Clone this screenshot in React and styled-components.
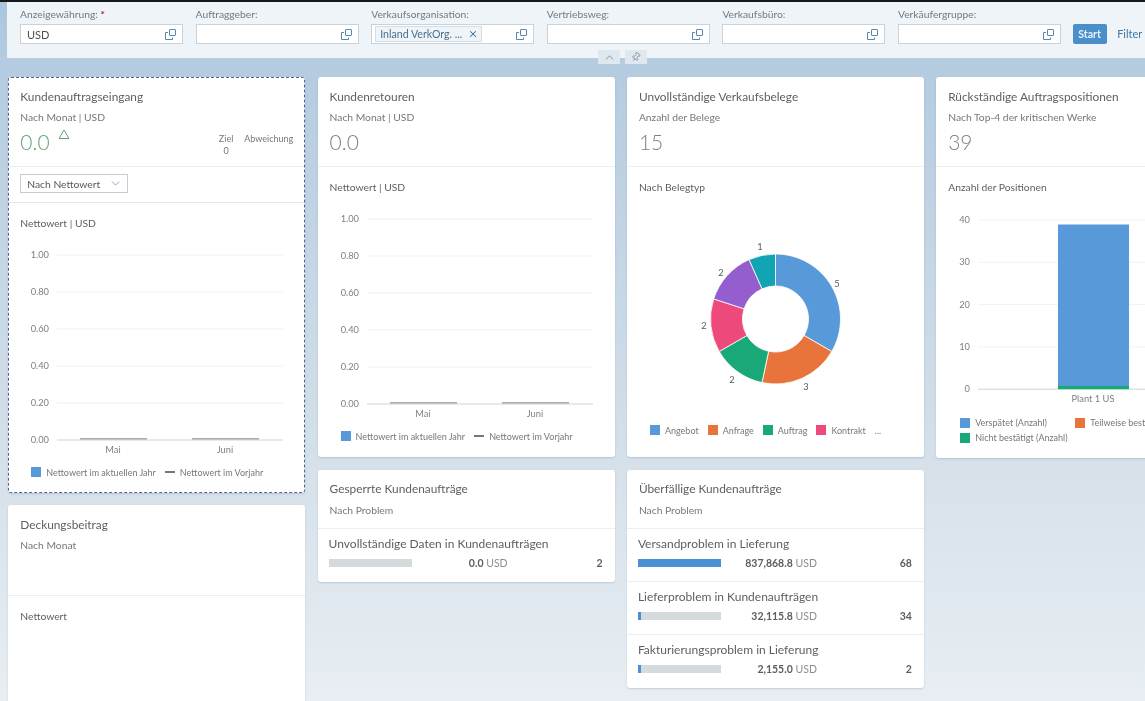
import React from "react";
import styled, { createGlobalStyle } from "styled-components";
import { ChevronDown, ChevronUp, Pin, X } from "lucide-react";

const Global = createGlobalStyle`
  html, body { margin: 0; padding: 0; }
  body { font-family: Lato, "Open Sans", sans-serif; color: #4a4e52; background: #e7edf2; }
  * { box-sizing: border-box; }
`;

const Page = styled.div`
  position: relative;
  width: 1145px;
  height: 701px;
  overflow: hidden;
  border-top: 2px solid #15181c;
  background: linear-gradient(#a9c6de 0, #b4cbe0 58px, #d6e1ea 470px, #e8eef3 699px);
  filter: blur(0.5px);
`;
const FilterBar = styled.div`
  display: flex;
  align-items: flex-start;
  height: 56px;
  margin-left: 7px;
  padding: 6px 0 0 13px;
  gap: 12.6px;
  background: #eff4f8;
  white-space: nowrap;
  overflow: hidden;
`;
const Field = styled.div`
  flex: 0 0 163px;
`;
const FieldLabel = styled.div`
  height: 16px;
  font-size: 10.3px;
  line-height: 13px;
  color: #74797d;
  b { color: #d0132b; font-weight: 700; }
`;
const InputBox = styled.div`
  display: flex;
  align-items: center;
  height: 20px;
  padding: 0 6px 0 6px;
  background: #fff;
  border: 1px solid #c9d2d9;
  font-size: 11px;
  color: #4b4f53;
`;
const InputText = styled.span`
  flex: 1;
`;
const Token = styled.span`
  display: flex;
  align-items: center;
  justify-content: space-between;
  width: 107px;
  height: 16px;
  margin: 0 auto 0 -3px;
  padding: 0 3px 0 4px;
  background: #eff4f8;
  border: 1px solid #d3dfe7;
  color: #48708f;
  font-size: 10.6px;
`;
const StartButton = styled.button`
  flex: 0 0 34px;
  height: 20px;
  margin: 16px 0 0 -1px;
  padding: 0;
  border: none;
  border-radius: 2px;
  background: #4b8fca;
  color: #e8f1f8;
  font: 700 10.5px Lato, sans-serif;
`;
const FilterLink = styled.span`
  margin: 19px 0 0 -2px;
  font-size: 11px;
  color: #3c78a8;
`;
const BarTools = styled.div`
  position: absolute;
  top: 48px;
  left: 598px;
  display: flex;
  gap: 5px;
`;
const ToolButton = styled.div`
  display: flex;
  align-items: center;
  justify-content: center;
  width: 22px;
  height: 14px;
  background: #dfe8ef;
  color: #5f7f99;
`;
const Grid = styled.div`
  display: grid;
  grid-template-columns: repeat(4, 297px);
  column-gap: 12.3px;
  padding: 19px 0 0 8.3px;
`;
const Column = styled.div`
  display: flex;
  flex-direction: column;
  gap: ${(p) => p.$gap ?? 12.5}px;
  align-items: stretch;
`;
const Card = styled.div`
  background: #fff;
  border-radius: 3px;
  box-shadow: 0 1px 2px rgba(60, 90, 120, 0.22);
  ${(p) => p.$focus && "outline: 1px dashed #4f6590; outline-offset: -1px;"}
  ${(p) => p.$tall && "height: 210px;"}
`;
const Head = styled.div`
  height: ${(p) => p.$h || 90}px;
  padding: 11.5px 12px 0;
  border-bottom: 1px solid #eceff1;
`;
const Title = styled.div`
  height: 16px;
  font-size: 11.85px;
  line-height: 16px;
  color: #5c6064;
  white-space: nowrap;
`;
const Sub = styled.div`
  margin-top: 5.5px;
  height: 14px;
  font-size: 10.3px;
  line-height: 14px;
  color: #74787c;
`;
const KpiRow = styled.div`
  display: flex;
  align-items: flex-start;
  margin-top: 3.5px;
`;
const KpiValue = styled.span`
  font-size: 21px;
  line-height: 28px;
  font-weight: 300;
  color: ${(p) => p.$color || "#7c8186"};
`;
const KpiArrow = styled.svg`
  margin: 1px 0 0 8px;
`;
const KpiSide = styled.div`
  margin: 5px 0 0 auto;
  display: flex;
  gap: 11px;
  font-size: 9px;
  line-height: 12px;
  color: #74787c;
  text-align: center;
`;
const SelectRow = styled.div`
  height: 36px;
  padding: 7px 12px 0;
  border-bottom: 1px solid #e3e7ea;
`;
const Select = styled.div`
  display: flex;
  align-items: center;
  justify-content: space-between;
  width: 108px;
  height: 19px;
  padding: 0 5px 0 6px;
  border: 1px solid #c6ccd1;
  font-size: 10.3px;
  color: #55595d;
`;
const Section = styled.div`
  padding-top: 12px;
`;
const SectionLabel = styled.div`
  height: 16px;
  padding-left: 12px;
  font-size: 10.3px;
  line-height: 16px;
  color: #5b5f63;
`;
const ChartSvg = styled.svg`
  display: block;
  margin-top: 14px;
  text {
    font-family: Lato, sans-serif;
    font-size: 9.3px;
    fill: #7b8084;
  }
`;
const Legend = styled.div`
  display: flex;
  align-items: center;
  gap: 9px;
  height: 14px;
  margin-top: ${(p) => p.$top ?? 4}px;
  margin-bottom: ${(p) => p.$bottom ?? 14}px;
  padding-left: 23px;
  white-space: nowrap;
`;
const LegendGrid = styled.div`
  display: grid;
  grid-template-columns: 115px 115px;
  grid-auto-rows: 15px;
  margin: 0 0 13px;
  padding-left: 24px;
  white-space: nowrap;
  overflow: hidden;
`;
const LegendItem = styled.span`
  display: flex;
  align-items: center;
  gap: 5px;
  font-size: 9px;
  color: #74787c;
`;
const Swatch = styled.i`
  flex: 0 0 10px;
  width: 10px;
  height: 10px;
  background: ${(p) => p.$c};
`;
const Dash = styled.i`
  width: 10px;
  height: 2px;
  background: #74787c;
`;
const ListRow = styled.div`
  height: 53px;
  padding: 7px 12px 0 11px;
  border-bottom: ${(p) => (p.$last ? "none" : "1px solid #eceff1")};
`;
const RowTitle = styled.div`
  height: 16px;
  font-size: 12px;
  line-height: 16px;
  color: #5b5f63;
  white-space: nowrap;
`;
const RowData = styled.div`
  display: grid;
  grid-template-columns: 83px 96px 1fr;
  align-items: center;
  margin-top: 4px;
  height: 14px;
  font-size: 10.5px;
`;
const Track = styled.div`
  height: 8px;
  background: #d5dadc;
`;
const Fill = styled.div`
  height: 100%;
  background: #4b8fd4;
`;
const Amount = styled.span`
  text-align: right;
  color: #8a8f93;
  b { font-weight: 700; color: #5b5f63; }
`;
const Count = styled.span`
  text-align: right;
  font-weight: 700;
  color: #5b5f63;
`;

const ValueHelp = () => (
  <svg width="11" height="11" viewBox="0 0 11 11" fill="none" stroke="#5d86a6" strokeWidth="1">
    <rect x="4.5" y="0.5" width="6" height="6" rx="0.5" />
    <path d="M3 3.5H0.5V10.5H7.5V8.5" />
  </svg>
);

const LineBars = () => {
  const rows = ["1.00", "0.80", "0.60", "0.40", "0.20", "0.00"];
  return (
    <ChartSvg width="297" height="216">
      {rows.map((r, i) => (
        <g key={r}>
          <line x1="49" x2="275" y1={10 + i * 37} y2={10 + i * 37} stroke={i === 5 ? "#cfd4d8" : "#eef0f2"} />
          <text x="41" y={13 + i * 37} textAnchor="end">{r}</text>
        </g>
      ))}
      <rect x="72" y="193" width="67" height="1.6" fill="#a9adb0" />
      <rect x="184" y="193" width="67" height="1.6" fill="#a9adb0" />
      <text x="105" y="208" textAnchor="middle">Mai</text>
      <text x="217" y="208" textAnchor="middle">Juni</text>
    </ChartSvg>
  );
};

const NetLegend = () => (
  <Legend>
    <LegendItem><Swatch $c="#5899da" />Nettowert im aktuellen Jahr</LegendItem>
    <LegendItem><Dash />Nettowert im Vorjahr</LegendItem>
  </Legend>
);

const slices = [
  [5, "#5899da", 837, 286],
  [3, "#e8743b", 806, 389],
  [2, "#19a979", 732, 382],
  [2, "#ed4a7b", 704, 328],
  [2, "#945ecf", 721, 275],
  [1, "#13a4b4", 760, 249],
];

const Donut = () => {
  const cx = 148.5, cy = 110, R = 65, r = 33;
  let a = 0;
  const pt = (rad, ang) => [cx + rad * Math.sin(ang), cy - rad * Math.cos(ang)];
  return (
    <ChartSvg width="297" height="216">
      {slices.map(([v, c, lx, ly]) => {
        const s = a;
        const e = a + (v / 15) * 2 * Math.PI;
        a = e;
        const large = e - s > Math.PI ? 1 : 0;
        const [x1, y1] = pt(R, s), [x2, y2] = pt(R, e), [x3, y3] = pt(r, e), [x4, y4] = pt(r, s);
        return (
          <g key={c}>
            <path
              d={`M${x1} ${y1}A${R} ${R} 0 ${large} 1 ${x2} ${y2}L${x3} ${y3}A${r} ${r} 0 ${large} 0 ${x4} ${y4}Z`}
              fill={c}
              stroke="#fff"
              strokeWidth="0.8"
            />
            <text x={lx - 627} y={ly - 208} textAnchor="middle" style={{ fill: "#55595d" }}>{v}</text>
          </g>
        );
      })}
    </ChartSvg>
  );
};

const StackChart = () => {
  const rows = [40, 30, 20, 10, 0];
  return (
    <ChartSvg width="297" height="206">
      {rows.map((r, i) => (
        <g key={r}>
          <line x1="42" x2="297" y1={11 + i * 42.3} y2={11 + i * 42.3} stroke={i === 4 ? "#cfd4d8" : "#f0f2f3"} />
          <text x="34" y={14 + i * 42.3} textAnchor="end">{r}</text>
        </g>
      ))}
      <rect x="122" y="15.5" width="71" height="161.5" fill="#5899da" />
      <rect x="122" y="177" width="71" height="3.2" fill="#19a979" />
      <text x="157" y="193" textAnchor="middle">Plant 1 US</text>
    </ChartSvg>
  );
};

const problems = [
  ["Versandproblem in Lieferung", 100, "837,868.8", 68],
  ["Lieferproblem in Kundenaufträgen", 4, "32,115.8", 34],
  ["Fakturierungsproblem in Lieferung", 4, "2,155.0", 2],
];

const fields = ["Auftraggeber:", "Verkaufsorganisation:", "Vertriebsweg:", "Verkaufsbüro:", "Verkäufergruppe:"];

export default function App() {
  return (
    <Page>
      <Global />
      <FilterBar>
        <Field>
          <FieldLabel>Anzeigewährung: <b>*</b></FieldLabel>
          <InputBox><InputText>USD</InputText><ValueHelp /></InputBox>
        </Field>
        {fields.map((f, i) => (
          <Field key={f}>
            <FieldLabel>{f}</FieldLabel>
            <InputBox>
              {i === 1 ? (
                <Token>Inland VerkOrg. ...<X size={10} strokeWidth={2.5} color="#48708f" /></Token>
              ) : (
                <InputText />
              )}
              <ValueHelp />
            </InputBox>
          </Field>
        ))}
        <StartButton>Start</StartButton>
        <FilterLink>Filter anpassen</FilterLink>
      </FilterBar>
      <BarTools>
        <ToolButton><ChevronUp size={13} strokeWidth={1.5} /></ToolButton>
        <ToolButton><Pin size={10} strokeWidth={1.5} style={{ transform: "rotate(35deg)" }} /></ToolButton>
      </BarTools>
      <Grid>
        <Column $gap={12}>
          <Card $focus>
            <Head>
              <Title>Kundenauftragseingang</Title>
              <Sub>Nach Monat | USD</Sub>
              <KpiRow>
                <KpiValue $color="#63a377">0.0</KpiValue>
                <KpiArrow width="12" height="11" viewBox="0 0 12 11" fill="none" stroke="#63a377">
                  <path d="M6 1L11 9.5H1Z" />
                </KpiArrow>
                <KpiSide>
                  <div>Ziel<br />0</div>
                  <div>Abweichung</div>
                </KpiSide>
              </KpiRow>
            </Head>
            <SelectRow>
              <Select>Nach Nettowert<ChevronDown size={13} strokeWidth={1.3} color="#5d86a6" /></Select>
            </SelectRow>
            <Section>
              <SectionLabel>Nettowert | USD</SectionLabel>
              <LineBars />
              <NetLegend />
            </Section>
          </Card>
          <Card $tall>
            <Head $h={91}>
              <Title>Deckungsbeitrag</Title>
              <Sub>Nach Monat</Sub>
            </Head>
            <Section>
              <SectionLabel>Nettowert</SectionLabel>
            </Section>
          </Card>
        </Column>
        <Column>
          <Card>
            <Head>
              <Title>Kundenretouren</Title>
              <Sub>Nach Monat | USD</Sub>
              <KpiRow><KpiValue>0.0</KpiValue></KpiRow>
            </Head>
            <Section>
              <SectionLabel>Nettowert | USD</SectionLabel>
              <LineBars />
              <NetLegend />
            </Section>
          </Card>
          <Card>
            <Head $h={59}>
              <Title>Gesperrte Kundenaufträge</Title>
              <Sub>Nach Problem</Sub>
            </Head>
            <ListRow $last>
              <RowTitle>Unvollständige Daten in Kundenaufträgen</RowTitle>
              <RowData>
                <Track />
                <Amount><b>0.0</b> USD</Amount>
                <Count>2</Count>
              </RowData>
            </ListRow>
          </Card>
        </Column>
        <Column>
          <Card>
            <Head>
              <Title>Unvollständige Verkaufsbelege</Title>
              <Sub>Anzahl der Belege</Sub>
              <KpiRow><KpiValue>15</KpiValue></KpiRow>
            </Head>
            <Section>
              <SectionLabel>Nach Belegtyp</SectionLabel>
              <Donut />
              <Legend $top={-2} $bottom={20}>
                <LegendItem><Swatch $c="#5899da" />Angebot</LegendItem>
                <LegendItem><Swatch $c="#e8743b" />Anfrage</LegendItem>
                <LegendItem><Swatch $c="#19a979" />Auftrag</LegendItem>
                <LegendItem><Swatch $c="#ed4a7b" />Kontrakt</LegendItem>
                <LegendItem>...</LegendItem>
              </Legend>
            </Section>
          </Card>
          <Card>
            <Head $h={59}>
              <Title>Überfällige Kundenaufträge</Title>
              <Sub>Nach Problem</Sub>
            </Head>
            {problems.map(([t, w, amt, n], i) => (
              <ListRow key={t} $last={i === problems.length - 1}>
                <RowTitle>{t}</RowTitle>
                <RowData>
                  <Track><Fill style={{ width: `${w}%` }} /></Track>
                  <Amount><b>{amt}</b> USD</Amount>
                  <Count>{n}</Count>
                </RowData>
              </ListRow>
            ))}
          </Card>
        </Column>
        <Column>
          <Card>
            <Head>
              <Title>Rückständige Auftragspositionen</Title>
              <Sub>Nach Top-4 der kritischen Werke</Sub>
              <KpiRow><KpiValue>39</KpiValue></KpiRow>
            </Head>
            <Section>
              <SectionLabel>Anzahl der Positionen</SectionLabel>
              <StackChart />
              <LegendGrid>
                <LegendItem><Swatch $c="#5899da" />Verspätet (Anzahl)</LegendItem>
                <LegendItem><Swatch $c="#e8743b" />Teilweise bestätigt (Anzahl)</LegendItem>
                <LegendItem><Swatch $c="#19a979" />Nicht bestätigt (Anzahl)</LegendItem>
              </LegendGrid>
            </Section>
          </Card>
        </Column>
      </Grid>
    </Page>
  );
}
